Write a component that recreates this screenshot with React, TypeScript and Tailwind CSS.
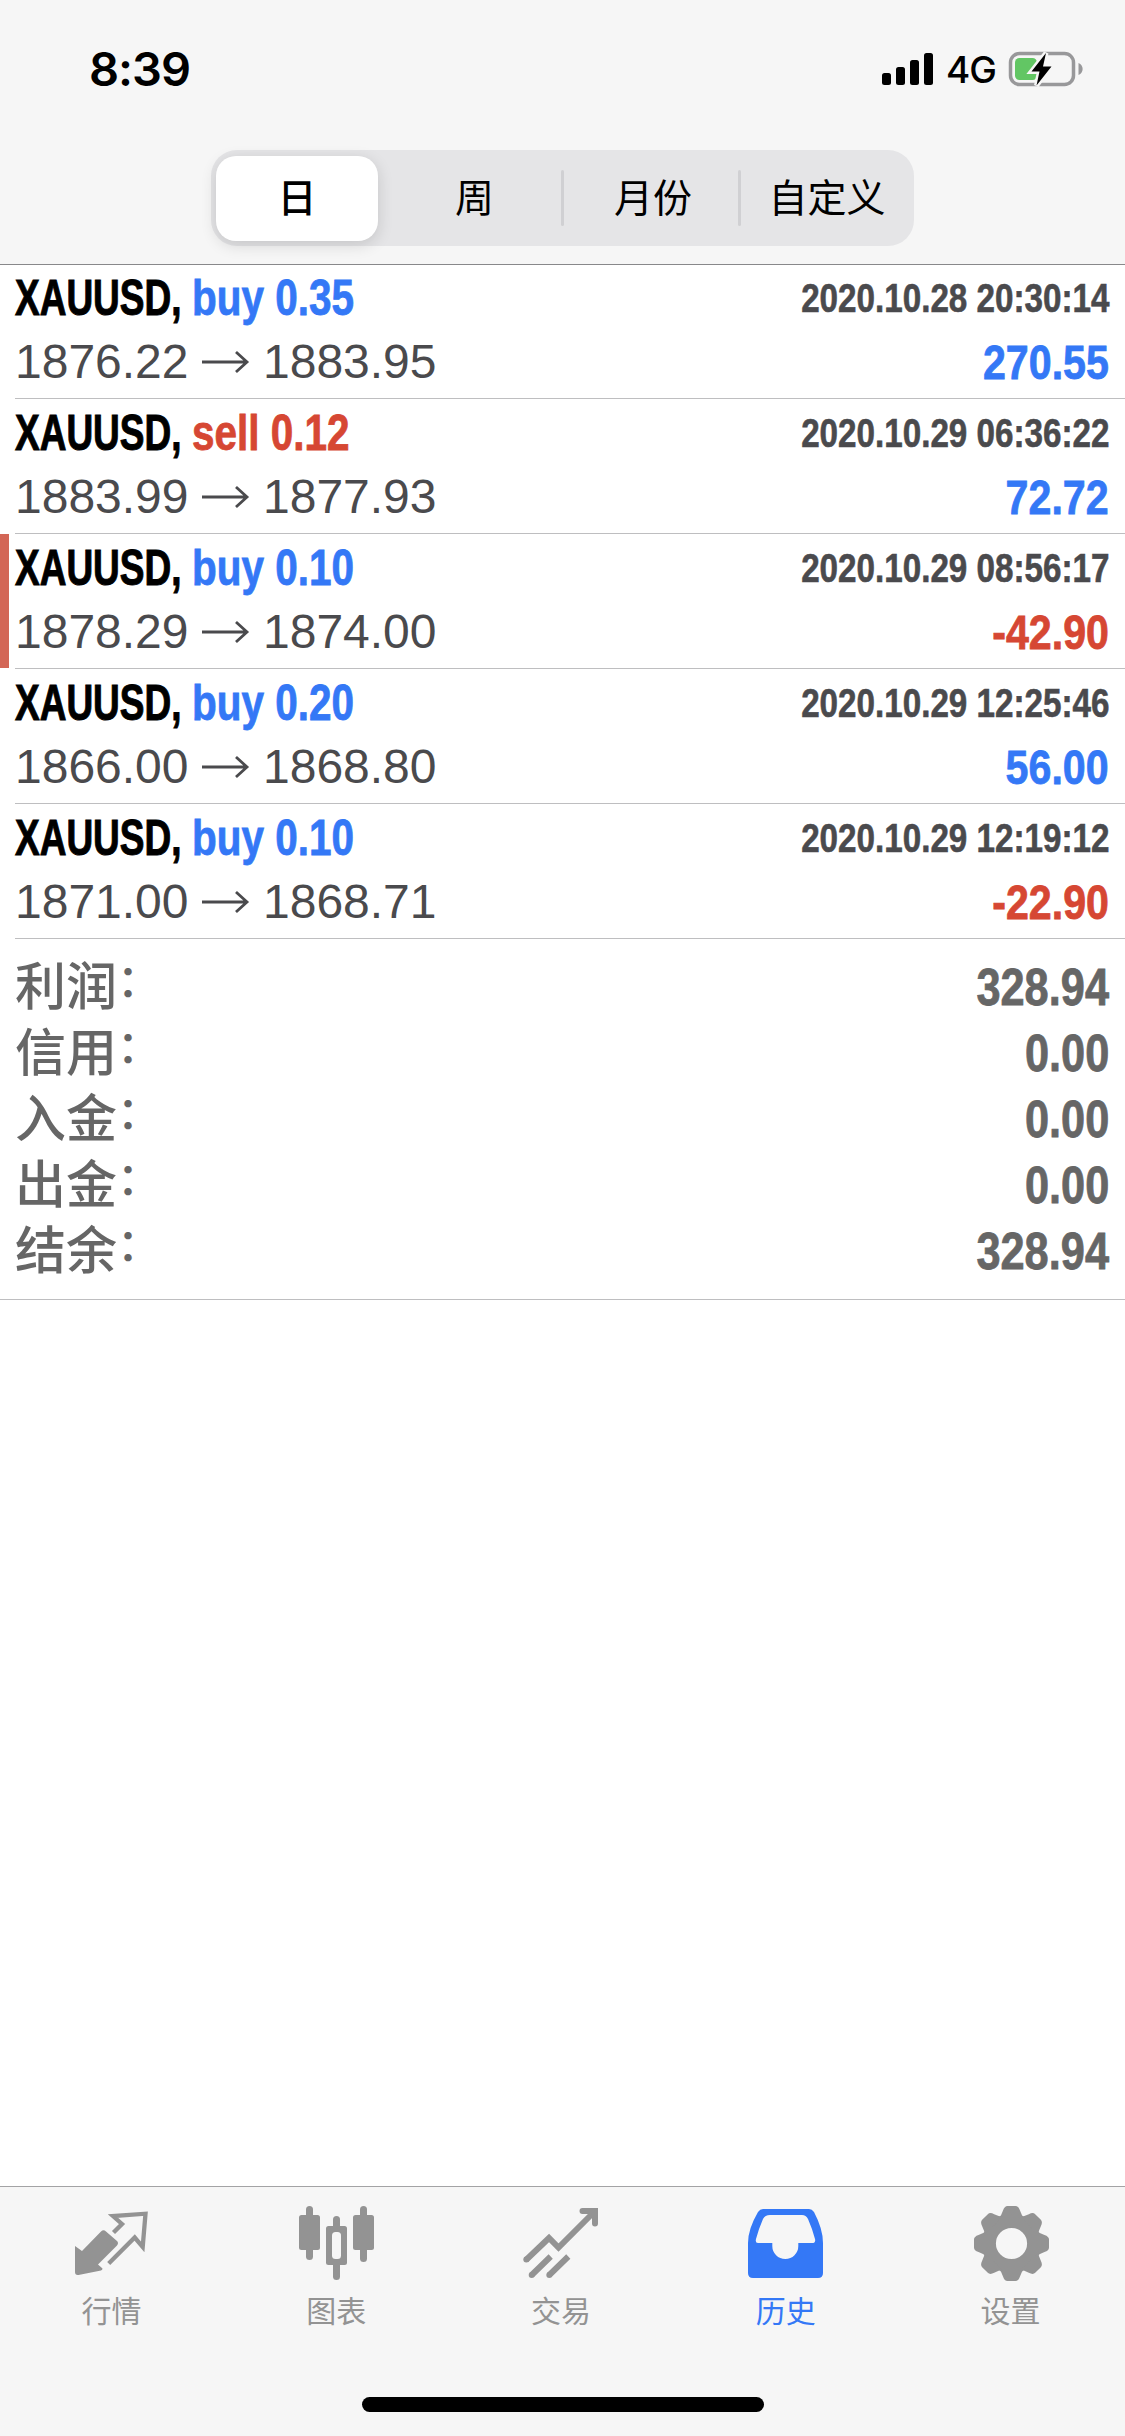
import React from 'react';

interface Deal {
  side: 'buy' | 'sell';
  volume: string;
  open: string;
  close: string;
  time: string;
  profit: string;
  flagged?: boolean;
}

const deals: Deal[] = [
  { side: 'buy', volume: '0.35', open: '1876.22', close: '1883.95', time: '2020.10.28 20:30:14', profit: '270.55' },
  { side: 'sell', volume: '0.12', open: '1883.99', close: '1877.93', time: '2020.10.29 06:36:22', profit: '72.72' },
  { side: 'buy', volume: '0.10', open: '1878.29', close: '1874.00', time: '2020.10.29 08:56:17', profit: '-42.90', flagged: true },
  { side: 'buy', volume: '0.20', open: '1866.00', close: '1868.80', time: '2020.10.29 12:25:46', profit: '56.00' },
  { side: 'buy', volume: '0.10', open: '1871.00', close: '1868.71', time: '2020.10.29 12:19:12', profit: '-22.90' },
];

const totals = [
  { label: '利润', value: '328.94' },
  { label: '信用', value: '0.00' },
  { label: '入金', value: '0.00' },
  { label: '出金', value: '0.00' },
  { label: '结余', value: '328.94' },
];

function StatusBar() {
  return (
    <div className="flex h-[138px] items-start justify-between pl-[89px] pr-[42px] pt-[39px] font-['Inter',sans-serif] text-black">
      <span className="text-[47px] font-semibold leading-[60px] tracking-[-1px]">8:39</span>
      <div className="flex h-[60px] items-center">
        <svg className="h-[34px] w-[52px]" viewBox="0 0 52 34">
          <rect x="0" y="21" width="9" height="12" rx="2.5" />
          <rect x="14" y="15" width="9" height="18" rx="2.5" />
          <rect x="28" y="8" width="9" height="25" rx="2.5" />
          <rect x="42" y="1" width="9" height="32" rx="2.5" />
        </svg>
        <span className="ml-3 w-[50px] pt-0.5 text-[37px] font-medium leading-[60px] tracking-[-1px]">4G</span>
        <svg className="ml-3 h-[40px] w-[75px]" viewBox="0 0 75 40">
          <rect x="2.500" y="4.500" width="63" height="31" rx="9" fill="none" stroke="#98989a" strokeWidth="3.500" />
          <path d="M70.500 14c5.500 2 5.500 10 0 12z" fill="#98989a" />
          <rect x="7" y="9" width="22" height="22" rx="4.500" fill="#62c664" />
          <path d="M38 4 23.500 22.500h8L28.500 36.500 43.500 17.500h-8.500z" fill="#000" stroke="#f6f6f6" strokeWidth="5" paintOrder="stroke" />
        </svg>
      </div>
    </div>
  );
}

function SegmentedControl() {
  return (
    <div className="ml-[211px] mt-3 flex h-[96px] w-[703px] items-center rounded-[26px] bg-[#e5e5e7] px-[5px] text-[39px] leading-none text-black">
      <div className="flex h-[85px] w-[162px] items-center justify-center rounded-[20px] bg-white font-medium shadow-[0_4px_16px_rgba(0,0,0,0.14)]">日</div>
      <div className="flex flex-1 items-center justify-center pl-2.5">
        <span>周</span>
      </div>
      <div className="h-[56px] w-[3px] rounded-full bg-[#d0d0d3]" />
      <div className="flex w-[174px] items-center justify-center pl-1">
        <span>月份</span>
      </div>
      <div className="h-[56px] w-[3px] rounded-full bg-[#d0d0d3]" />
      <div className="flex w-[168px] items-center justify-center pl-1">
        <span>自定义</span>
      </div>
    </div>
  );
}

function DealRow({ deal }: { deal: Deal }) {
  return (
    <div className="flex h-[135px]">
      <div className={deal.flagged ? 'h-[134px] w-[9px] bg-[#d36656]' : 'w-[9px]'} />
      <div className="ml-1.5 flex-1 border-b border-[#bebec0] pr-4 pt-[1px]">
        <div className="flex h-[66px] items-center justify-between text-[50px] font-bold leading-[66px]">
          <div className="flex">
            <div className="w-[177px]">
              <span className="inline-block origin-left scale-x-[0.74] whitespace-nowrap text-black [-webkit-text-stroke:1px_currentColor]">XAUUSD,</span>
            </div>
            <span
              className={
                deal.side === 'buy'
                  ? 'inline-block origin-left scale-x-[0.81] whitespace-nowrap text-[#3478f6] [-webkit-text-stroke:0.8px_currentColor]'
                  : 'inline-block origin-left scale-x-[0.81] whitespace-nowrap text-[#d64733] [-webkit-text-stroke:0.8px_currentColor]'
              }
            >
              {deal.side} {deal.volume}
            </span>
          </div>
          <span className="inline-block origin-right scale-x-[0.83] whitespace-nowrap text-[40px] text-[#4a4a4d] [-webkit-text-stroke:0.6px_currentColor]">
            {deal.time}
          </span>
        </div>
        <div className="flex h-[62px] items-center justify-between text-[48px] leading-[62px] text-[#4a4a4d]">
          <div className="flex items-center">
            <span className="w-[187px]">{deal.open}</span>
            <svg className="w-[61px]" height="26" viewBox="0 0 61 26" fill="none" stroke="currentColor" strokeWidth="2.800">
              <path d="M0 13h45M34 3l11 10-11 10" />
            </svg>
            <span>{deal.close}</span>
          </div>
          <span
            className={
              deal.profit.startsWith('-')
                ? 'inline-block origin-right scale-x-[0.84] text-[49px] font-bold text-[#d64733] [-webkit-text-stroke:0.8px_currentColor]'
                : 'inline-block origin-right scale-x-[0.84] text-[49px] font-bold text-[#3478f6] [-webkit-text-stroke:0.8px_currentColor]'
            }
          >
            {deal.profit}
          </span>
        </div>
      </div>
    </div>
  );
}

function QuotesIcon() {
  return (
    <svg className="size-[75px]" viewBox="0 0 75 75" fill="currentColor">
      <path d="M0 40l7 5 19-19.500q2.500-2.500 5 0L42 35q2 2 0 4.500L23 58.500l4.500 4q0 1.500-1.500 2L3.500 69Q0 69.500 0 66z" />
      <path d="M38.500 26.500l8.500-8.500-9-8 32.500-2.300L67.700 41l-8-9.500-26 26" fill="none" stroke="currentColor" strokeWidth="4.300" />
    </svg>
  );
}

function ChartsIcon() {
  return (
    <svg className="size-[75px] overflow-visible" viewBox="0 0 75 75" fill="currentColor">
      <rect x="6" y="0" width="7" height="54" rx="3.500" />
      <rect x="-1" y="9" width="21" height="35" rx="2.500" />
      <rect x="33" y="10" width="7" height="64" rx="3.500" />
      <rect x="26" y="20" width="21" height="39" rx="2.500" />
      <rect x="32" y="26" width="9" height="27" rx="3.500" fill="#f6f6f6" />
      <rect x="60" y="0" width="7" height="56" rx="3.500" />
      <rect x="53" y="9" width="21" height="35" rx="2.500" />
    </svg>
  );
}

function TradeIcon() {
  return (
    <svg className="size-[75px] overflow-visible" viewBox="0 0 75 75" fill="none" stroke="currentColor" strokeWidth="6">
      <path d="M2 54L25 32l9.500 9.500L70 6" />
      <circle cx="2.300" cy="53.500" r="3" fill="currentColor" stroke="none" />
      <path d="M58.500 5H71v12.500" strokeLinecap="round" />
      <path d="M7.700 69l19-18.500M25.300 69l19-18.500" />
      <circle cx="7.700" cy="69" r="3" fill="currentColor" stroke="none" />
      <circle cx="25.300" cy="69" r="3" fill="currentColor" stroke="none" />
    </svg>
  );
}

function HistoryIcon() {
  return (
    <svg className="size-[75px] overflow-visible" viewBox="0 0 75 75" fill="currentColor" fillRule="evenodd">
      <path d="M14 3h46q3 0 5 3 9 17 9 31v30q0 5-5 5H4q-5 0-5-5V37Q-1 23 9 6q2-3 5-3zM21 9q-5 0-7 4Q10 22 7 33q-1 4 2 4h14.300v3a13 13 0 0 0 26 0v-3H63q4 0 3-4-3-11-7-20-2-4-6-4z" />
    </svg>
  );
}

function SettingsIcon() {
  return (
    <svg className="size-[75px]" viewBox="-37.500 -37.500 75 75" fill="currentColor">
      <circle r="22.300" fill="none" stroke="currentColor" strokeWidth="13.400" />
      {[0, 45, 90, 135, 180, 225, 270, 315].map((angle) => (
        <path key={angle} d="M-13-25Q-10-28-8.500-33-7-37.500-4-37.500h8Q7-37.500 8.500-33 10-28 13-25z" transform={`rotate(${angle})`} />
      ))}
    </svg>
  );
}

const tabs = [
  { label: '行情', icon: <QuotesIcon /> },
  { label: '图表', icon: <ChartsIcon /> },
  { label: '交易', icon: <TradeIcon /> },
  { label: '历史', icon: <HistoryIcon />, active: true },
  { label: '设置', icon: <SettingsIcon /> },
];

function TabBar() {
  return (
    <nav className="flex h-[250px] flex-col items-center border-t border-[#a3a3a5] bg-[#f6f6f6]">
      <div className="grid w-full grid-cols-5 pr-[1px]">
        {tabs.map((tab) => (
          <div
            key={tab.label}
            className={tab.active ? 'flex flex-col items-center pt-[19px] text-[#3478f6]' : 'flex flex-col items-center pt-[19px] text-[#939393]'}
          >
            {tab.icon}
            <span className="mr-0.5 mt-[16px] text-[30px] leading-[30px]">{tab.label}</span>
          </div>
        ))}
      </div>
      <div className="mb-6 mt-auto h-[15px] w-[402px] rounded-full bg-black" />
    </nav>
  );
}

export default function App() {
  return (
    <div className="flex h-[2436px] w-[1125px] flex-col overflow-hidden bg-white font-['Liberation_Sans','Noto_Sans_CJK_SC',sans-serif]">
      <header className="h-[265px] border-b border-[#88888a] bg-[#f6f6f6]">
        <StatusBar />
        <SegmentedControl />
      </header>
      <main className="flex-1">
        <div className="-mt-px">
          {deals.map((deal) => (
            <DealRow key={deal.time} deal={deal} />
          ))}
        </div>
        <div className="h-[361px] border-b border-[#bebec0] pl-[15px] pr-4 pt-4 text-[51px] font-bold leading-[66px] text-[#666]">
          {totals.map((total) => (
            <div key={total.label} className="flex h-[66px] justify-between">
              <div className="flex font-medium">
                <span>{total.label}</span>
                <span className="-mt-1.5 text-[44px]">：</span>
              </div>
              <span className="inline-block origin-right scale-x-[0.85] [-webkit-text-stroke:0.8px_currentColor]">{total.value}</span>
            </div>
          ))}
        </div>
      </main>
      <TabBar />
    </div>
  );
}
